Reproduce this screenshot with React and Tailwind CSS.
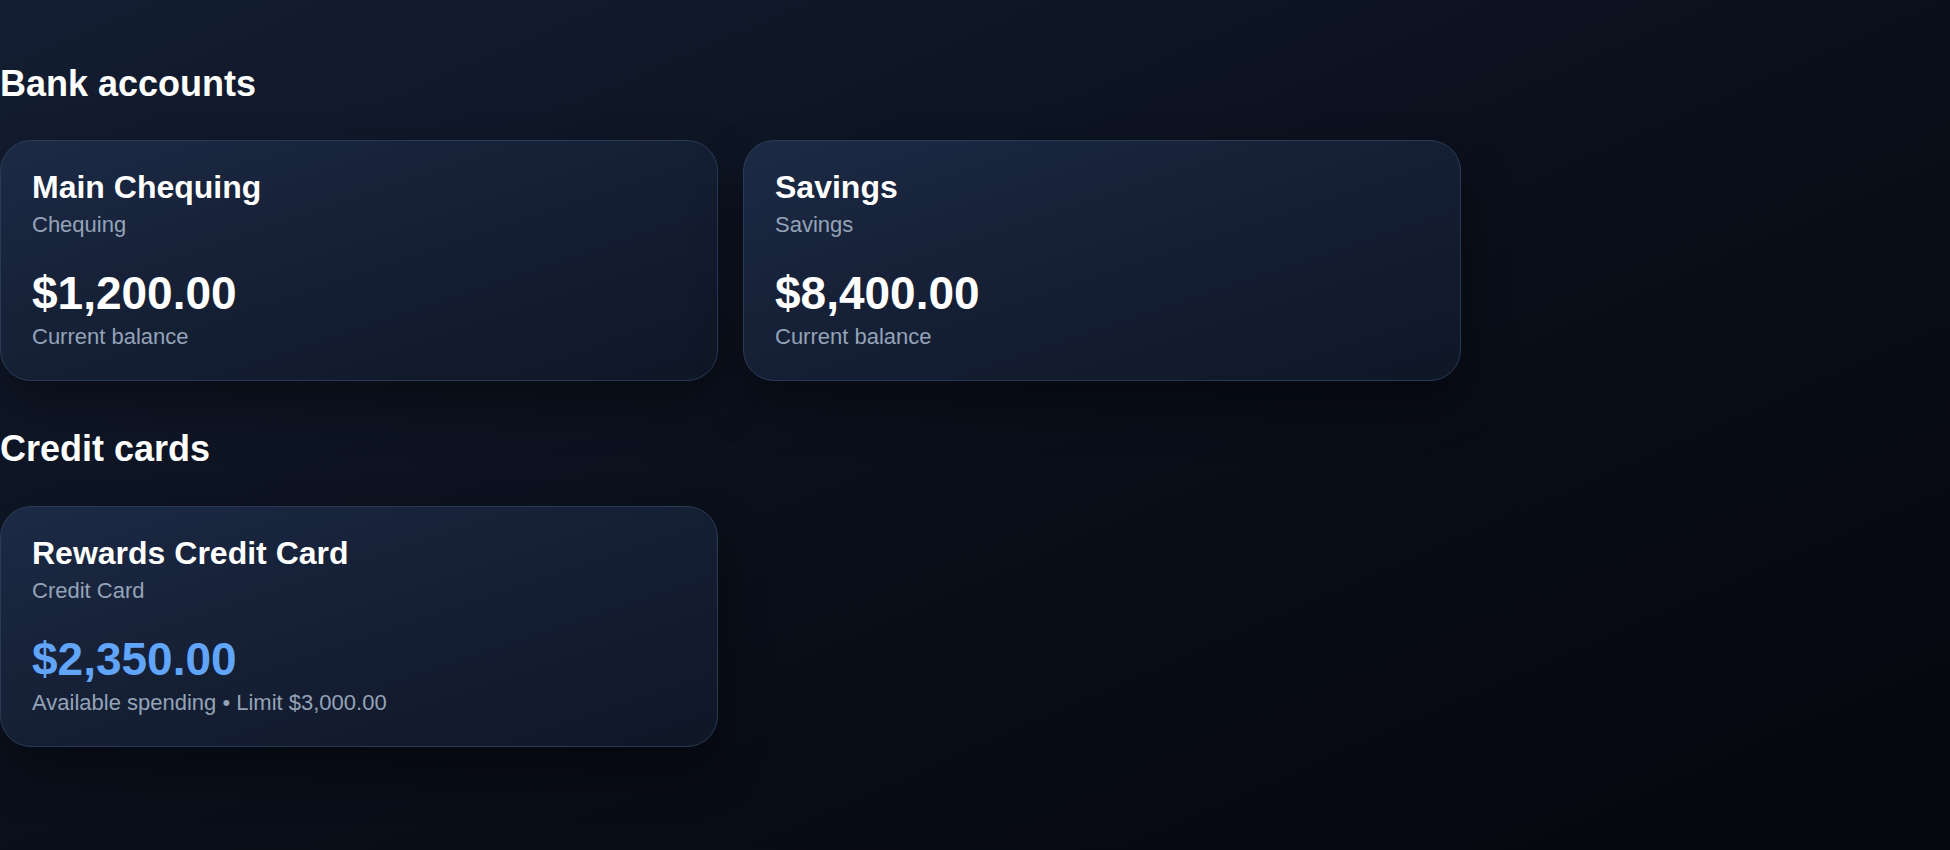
import React from "react";

const font = { fontFamily: '"Liberation Sans", Arial, sans-serif' };

function AccountCard({ name, type, amount, label, accent }) {
  return (
    <div className="rounded-[31px] border border-[#2a3a55] bg-linear-to-br from-[#1c2a45] via-[#151f34] to-[#0f1626] px-[31px] pt-[27px] pb-[27px] shadow-[0_24px_48px_rgba(0,0,0,0.4)]">
      <div className="text-[32px] font-bold leading-[1.2] text-white">{name}</div>
      <div className="mt-px text-[22px] leading-[1.5] text-[#94a3b8]">{type}</div>
      <div
        className={
          "mt-[27px] text-[46px] font-bold leading-[1.1] " +
          (accent ? "text-[#60a5fa]" : "text-white")
        }
      >
        {amount}
      </div>
      <div className="mt-[2px] text-[22px] leading-[1.5] text-[#94a3b8]">{label}</div>
    </div>
  );
}

export default function App() {
  return (
    <div
      style={font}
      className="min-h-[850px] w-full bg-linear-to-br from-[#141e32] via-[#0a0f1b] to-[#05070d] pt-[62px]"
    >
      <section>
        <h2 className="mb-[35px] text-[36px] font-bold leading-[1.2] text-white">Bank accounts</h2>
        <div className="grid w-[1461px] grid-cols-2 gap-[25px]">
          <AccountCard name="Main Chequing" type="Chequing" amount="$1,200.00" label="Current balance" />
          <AccountCard name="Savings" type="Savings" amount="$8,400.00" label="Current balance" />
        </div>
      </section>
      <section className="mt-[46px]">
        <h2 className="mb-[36px] text-[36px] font-bold leading-[1.2] text-white">Credit cards</h2>
        <div className="grid w-[1461px] grid-cols-2 gap-[25px]">
          <AccountCard
            name="Rewards Credit Card"
            type="Credit Card"
            amount="$2,350.00"
            label="Available spending • Limit $3,000.00"
            accent
          />
        </div>
      </section>
    </div>
  );
}
